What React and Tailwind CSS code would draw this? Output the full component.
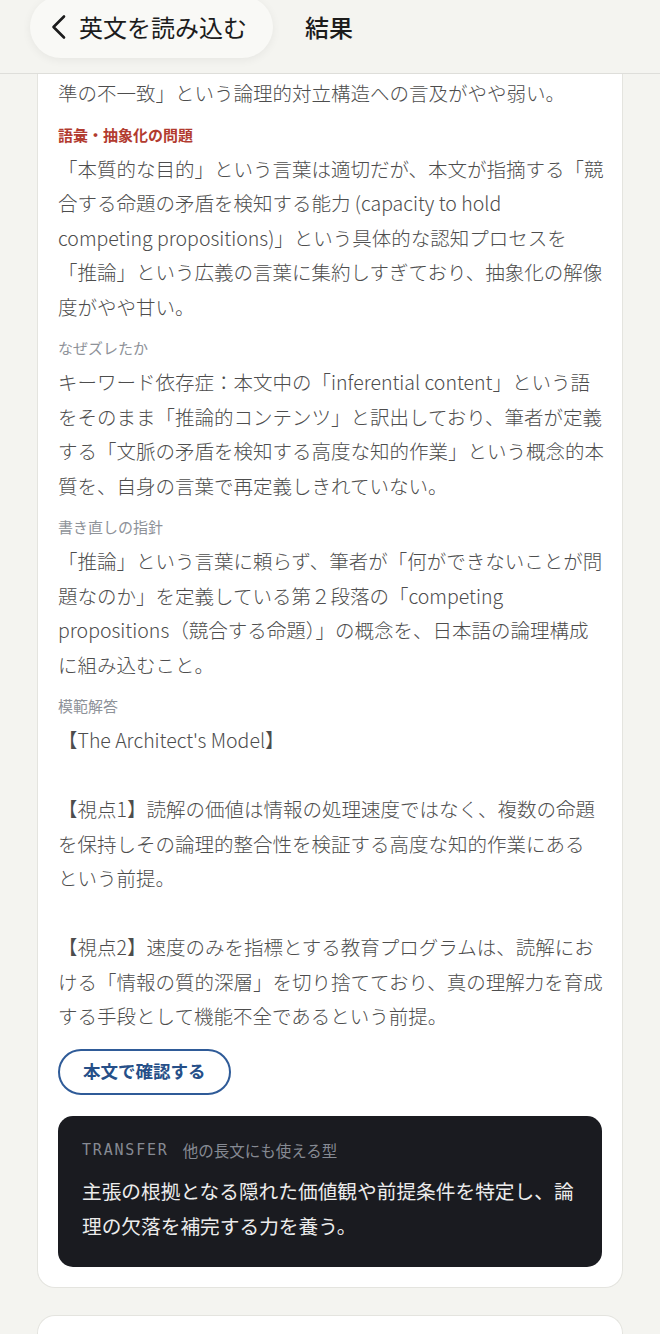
import React from 'react';

const jp = { fontFamily: '"Noto Sans CJK JP", "Noto Sans", sans-serif' };

const Label = ({ children, red }) => (
    <div className={`text-[15px] leading-[20px] mb-[7px] ${red ? 'text-[#b23b2f] font-bold' : 'text-[#8e9299]'}`}>
        {children}
    </div>
);

const Lines = ({ lines }) => (
    <div className="text-[19.5px] leading-[34.5px] text-[#4d4d4d] font-light">
        {lines.map((l, i) => (
            <span key={i} className="block whitespace-nowrap min-h-[34.5px]">{l}</span>
        ))}
    </div>
);

export default function App() {
    return (
        <div className="min-h-[1334px] bg-[#f4f4f0] overflow-hidden" style={jp}>
            {/* Header */}
            <div className="h-[74px] flex items-start border-b border-[#dededa] bg-[#f4f4f0]">
                <button className="ml-[30px] -mt-[4px] h-[62px] pl-[20px] pr-[26px] flex items-center gap-[11px] rounded-full bg-[#f9f9f6] shadow-[0_2px_10px_rgba(0,0,0,0.06)]">
                    <svg width="18" height="26" viewBox="0 0 18 26" fill="none">
                        <path d="M14 2.5 L3.5 13 L14 23.5" stroke="#1c1c1c" strokeWidth="2.6" strokeLinecap="round" strokeLinejoin="round" />
                    </svg>
                    <span className="text-[24px] text-[#1c1c1c]">英文を読み込む</span>
                </button>
                <div className="ml-[32px] h-[54px] flex items-center text-[24px] font-medium text-[#1c1c1c]">結果</div>
            </div>

            <div className="px-[37px]">
                {/* Card */}
                <div className="bg-white border border-t-0 border-[#e4e4df] rounded-b-[18px] px-[20px] pt-[2px] pb-[20px]">
                    <Lines lines={['準の不一致」という論理的対立構造への言及がやや弱い。']} />

                    <div className="mt-[14px]">
                        <Label red>語彙・抽象化の問題</Label>
                        <Lines lines={[
                            '「本質的な目的」という言葉は適切だが、本文が指摘する「競',
                            '合する命題の矛盾を検知する能力 (capacity to hold',
                            'competing propositions)」という具体的な認知プロセスを',
                            '「推論」という広義の言葉に集約しすぎており、抽象化の解像',
                            '度がやや甘い。',
                        ]} />
                    </div>

                    <div className="mt-[14px]">
                        <Label>なぜズレたか</Label>
                        <Lines lines={[
                            'キーワード依存症：本文中の「inferential content」という語',
                            'をそのまま「推論的コンテンツ」と訳出しており、筆者が定義',
                            'する「文脈の矛盾を検知する高度な知的作業」という概念的本',
                            '質を、自身の言葉で再定義しきれていない。',
                        ]} />
                    </div>

                    <div className="mt-[14px]">
                        <Label>書き直しの指針</Label>
                        <Lines lines={[
                            '「推論」という言葉に頼らず、筆者が「何ができないことが問',
                            '題なのか」を定義している第２段落の「competing',
                            'propositions（競合する命題）」の概念を、日本語の論理構成',
                            'に組み込むこと。',
                        ]} />
                    </div>

                    <div className="mt-[14px]">
                        <Label>模範解答</Label>
                        <Lines lines={[
                            '【The Architect\'s Model】',
                            '',
                            '【視点1】読解の価値は情報の処理速度ではなく、複数の命題',
                            'を保持しその論理的整合性を検証する高度な知的作業にある',
                            'という前提。',
                            '',
                            '【視点2】速度のみを指標とする教育プログラムは、読解にお',
                            'ける「情報の質的深層」を切り捨てており、真の理解力を育成',
                            'する手段として機能不全であるという前提。',
                        ]} />
                    </div>

                    <button className="mt-[15px] h-[46px] px-[23px] rounded-full border-2 border-[#2f5b98] text-[#264f88] text-[17.5px] font-bold">
                        本文で確認する
                    </button>

                    {/* Transfer */}
                    <div className="mt-[21px] rounded-[15px] bg-[#1a1b20] px-[24px] pt-[23px] pb-[24px]">
                        <div className="flex items-center gap-[14px] text-[#868a93]">
                            <span className="text-[15px] tracking-[0.12em]" style={{ fontFamily: '"DejaVu Sans Mono", monospace' }}>TRANSFER</span>
                            <span className="text-[15.5px]">他の長文にも使える型</span>
                        </div>
                        <div className="mt-[11px] text-[19.7px] leading-[35px] text-[#ececec]">
                            <span className="block whitespace-nowrap">主張の根拠となる隠れた価値観や前提条件を特定し、論</span>
                            <span className="block whitespace-nowrap">理の欠落を補完する力を養う。</span>
                        </div>
                    </div>
                </div>

                {/* Next card */}
                <div className="mt-[27px] h-[60px] bg-white border border-b-0 border-[#e4e4df] rounded-t-[18px]"></div>
            </div>
        </div>
    );
}
